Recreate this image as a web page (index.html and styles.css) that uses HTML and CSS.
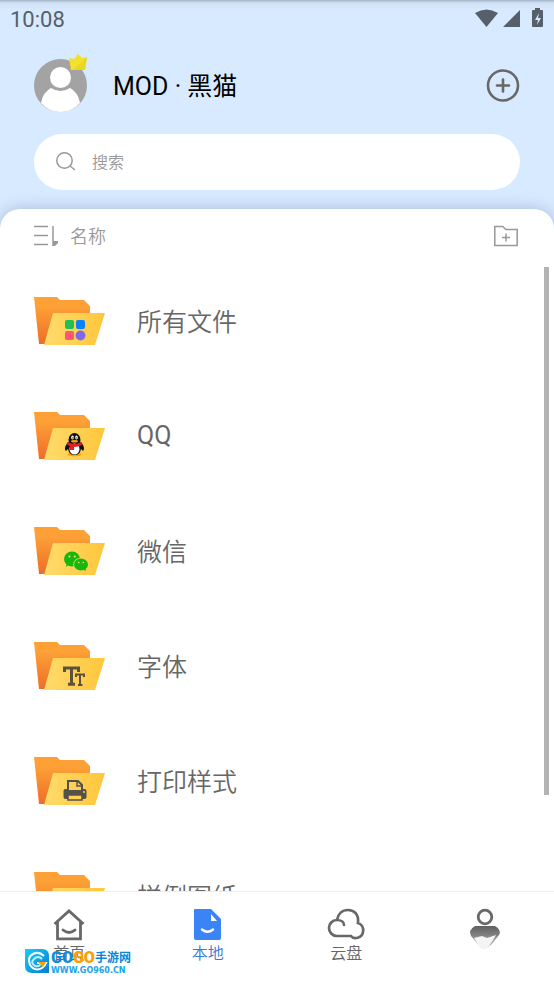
FILE: index.html
```html
<!DOCTYPE html>
<html lang="zh-CN">
<head>
    <meta charset="UTF-8">
    <meta name="viewport" content="width=device-width, initial-scale=1.0">
    <title>本地</title>
    <link rel="stylesheet" href="styles.css">
</head>
<body>
    <svg class="defs" aria-hidden="true">
        <defs>
            <linearGradient id="backFill" x1="0" y1="0" x2="0" y2="1">
                <stop offset="0.2" stop-color="#fda136"/>
                <stop offset="1" stop-color="#ee6d27"/>
            </linearGradient>
            <linearGradient id="frontFill" x1="0" y1="0" x2="1" y2="0">
                <stop offset="0" stop-color="#ffdb6c"/>
                <stop offset="1" stop-color="#ffc63b"/>
            </linearGradient>
            <linearGradient id="meFill" x1="0" y1="0" x2="0" y2="1">
                <stop offset="0" stop-color="#606060"/>
                <stop offset="0.4" stop-color="#808080"/>
                <stop offset="0.7" stop-color="#b6b6b6"/>
                <stop offset="1" stop-color="#f5f5f5"/>
            </linearGradient>
            <linearGradient id="markFill" x1="0" y1="0" x2="1" y2="1">
                <stop offset="0" stop-color="#16cdf5"/>
                <stop offset="1" stop-color="#087dd1"/>
            </linearGradient>
            <symbol id="folder" viewBox="0 0 72 50">
                <path d="M0 1h23l3 3h24l6 6v38H5z" fill="url(#backFill)"/>
                <path d="M19 17h52l-10 32H10z" fill="url(#frontFill)"/>
            </symbol>
        </defs>
    </svg>

    <div class="app">
        <header class="header">
            <div class="status-bar">
                <span>10:08</span>
                <svg width="70" height="20" viewBox="0 0 70 20" fill="#56606a">
                    <path d="M1 4Q12.500-3 24 4L12.500 18z"/>
                    <path d="M46 1v17H29z"/>
                    <path d="M59 1h2V-1h5v2h2q1 0 1 1v15q0 1-1 1h-9q-1 0-1-1V2q0-1 1-1z"/>
                    <path d="M65 4l-4 7h3l-1 5 4-7h-3z" fill="#d8eaff"/>
                </svg>
            </div>

            <div class="profile">
                <div class="avatar">
                    <svg width="54" height="54" viewBox="0 0 54 54">
                        <circle cx="26.500" cy="26.500" r="26.500" fill="#a3a3a3"/>
                        <circle cx="26.500" cy="18.500" r="10.500" fill="#fff"/>
                        <path d="M7 44Q9 33 17 29q9.500 6 19 0 8 4 10 15-8 9-19.500 9T7 44z" fill="#fff"/>
                    </svg>
                    <svg class="crown" width="18" height="17" viewBox="0 0 18 17">
                        <path d="M0 4l5 1 4-5 4 4 5-1-2 13H2z" fill="#f2e22b"/>
                        <path d="M18 3L4 16h12z" fill="#ead71f"/>
                    </svg>
                </div>
                <h1 class="user-name">MOD · 黑猫</h1>
                <button type="button" aria-label="添加">
                    <svg width="34" height="34" viewBox="0 0 34 34" fill="none" stroke="#686868" stroke-width="2.600" stroke-linecap="round">
                        <circle cx="17" cy="16.500" r="15"/>
                        <path d="M17 10.500v12M11 16.500h12"/>
                    </svg>
                </button>
            </div>

            <label class="search">
                <svg width="20" height="20" viewBox="0 0 20 20" fill="none" stroke="#999" stroke-width="1.500">
                    <circle cx="8.500" cy="8.500" r="7.700"/>
                    <path d="M14 14l5 4"/>
                </svg>
                <input type="text" placeholder="搜索" aria-label="搜索">
            </label>
        </header>

        <main class="panel">
            <div class="toolbar">
                <button class="sort-btn" type="button">
                    <svg width="24" height="22" viewBox="0 0 24 22" fill="none" stroke="#999" stroke-width="1.500">
                        <path d="M0 1.500h14M0 10.500h14M0 19.500h14M19 1v20"/>
                        <path d="M19 16h5v2l-3 3h-2z" fill="#999" stroke="none"/>
                    </svg>
                    <span class="label">名称</span>
                </button>
                <button type="button" aria-label="新建文件夹">
                    <svg width="24" height="22" viewBox="0 0 24 22" fill="none" stroke="#999" stroke-width="1.500">
                        <path d="M.8 1.500h8l3 3h11.400v16H.8z"/>
                        <path d="M12 8.500v8M8 12.500h8"/>
                    </svg>
                </button>
            </div>

            <div class="list-area">
                <ul class="folder-list">
                    <li class="folder-row">
                        <svg class="folder-icon" viewBox="0 0 72 50">
                            <use href="#folder"/>
                            <rect x="31" y="24" width="9" height="9" rx="2" fill="#21c052"/>
                            <rect x="42" y="24" width="9" height="9" rx="2" fill="#0782ff"/>
                            <rect x="31" y="35" width="9" height="9" rx="2" fill="#fb5871"/>
                            <circle cx="46.500" cy="39.500" r="4.900" fill="#7e68ef"/>
                        </svg>
                        <span class="label">所有文件</span>
                    </li>
                    <li class="folder-row">
                        <svg class="folder-icon" viewBox="0 0 72 50">
                            <use href="#folder"/>
                            <ellipse cx="40.500" cy="43.500" rx="7" ry="1.800" fill="#f5a400"/>
                            <path d="M34 31c-3 4-4 7-2 9l2-2q1 6 6.500 6t6.500-6l2 2c2-2 1-5-2-9z" fill="#111"/>
                            <ellipse cx="40.500" cy="29" rx="6" ry="7" fill="#111"/>
                            <ellipse cx="40.500" cy="38" rx="5" ry="5.500" fill="#fff"/>
                            <ellipse cx="38.500" cy="26.500" rx="1.300" ry="2" fill="#fff"/>
                            <ellipse cx="42.500" cy="26.500" rx="1.300" ry="2" fill="#fff"/>
                            <circle cx="38.800" cy="26.800" r=".6"/>
                            <circle cx="42.200" cy="26.800" r=".6"/>
                            <ellipse cx="40.500" cy="30.300" rx="3.500" ry="1.200" fill="#f7a500"/>
                            <path d="M34 31q6.500 4 13 0l1 3q-4 2-8 2v3h-4v-4l-3-1z" fill="#e51d24"/>
                        </svg>
                        <span>QQ</span>
                    </li>
                    <li class="folder-row">
                        <svg class="folder-icon" viewBox="0 0 72 50">
                            <use href="#folder"/>
                            <path d="M32 41l1-5h5z" fill="#18b70d"/>
                            <ellipse cx="38" cy="33" rx="8" ry="7.500" fill="#18b70d"/>
                            <ellipse cx="47" cy="38.500" rx="7.800" ry="6.800" fill="#ffce50"/>
                            <ellipse cx="47" cy="38.500" rx="7" ry="6" fill="#18b70d"/>
                            <path d="M48 43l4 2-1-4z" fill="#18b70d"/>
                            <g fill="#ffe17b">
                                <circle cx="35.500" cy="30.500" r="1"/>
                                <circle cx="40.800" cy="30.500" r="1"/>
                                <circle cx="44.800" cy="36.500" r=".8"/>
                                <circle cx="49.300" cy="36.500" r=".8"/>
                            </g>
                        </svg>
                        <span class="label">微信</span>
                    </li>
                    <li class="folder-row">
                        <svg class="folder-icon" viewBox="0 0 72 50">
                            <use href="#folder"/>
                            <g fill="none" stroke="#5b523e">
                                <path d="M30.500 31v-4h14v4M37.500 27v16M34 43.300h7" stroke-width="3"/>
                                <path d="M42 36v-2.500h8V36M46 33v10.500M44 44h4.500" stroke-width="2"/>
                            </g>
                        </svg>
                        <span class="label">字体</span>
                    </li>
                    <li class="folder-row">
                        <svg class="folder-icon" viewBox="0 0 72 50">
                            <use href="#folder"/>
                            <rect x="29.500" y="33" width="23" height="10" rx="2" fill="#555149"/>
                            <path d="M34 35V25h10l4 4v6z" fill="#ffd057" stroke="#555149" stroke-width="2"/>
                            <path d="M43 25v5h5" fill="none" stroke="#555149" stroke-width="1.500"/>
                            <path d="M34 39h14v5H34z" fill="#ffd057" stroke="#555149" stroke-width="1.500"/>
                            <circle cx="50" cy="36" r="1" fill="#ffd057"/>
                        </svg>
                        <span class="label">打印样式</span>
                    </li>
                    <li class="folder-row">
                        <svg class="folder-icon" viewBox="0 0 72 50">
                            <use href="#folder"/>
                        </svg>
                        <span class="label">样例图纸</span>
                    </li>
                </ul>
                <div class="scroll-thumb"></div>
            </div>
        </main>

        <nav class="tab-bar">
            <a class="tab" href="#home">
                <svg width="34" height="34" viewBox="0 0 34 34" fill="none" stroke="#686868" stroke-width="2.800">
                    <path d="M5.500 14v16.800h23V14"/>
                    <path d="M2.500 16L17 3l14.500 13"/>
                    <path d="M11 22q6 5 12 0" stroke-linecap="round"/>
                </svg>
                <span>首页</span>
            </a>
            <a class="tab active" href="#local">
                <svg width="34" height="34" viewBox="0 0 34 34">
                    <path d="M4 1h16l10 10v19q0 2-2 2H5q-2 0-2-2V2q0-1 1-1z" fill="#3a84f5"/>
                    <path d="M20 6v7h6z" fill="#fff"/>
                    <path d="M11 21.500q5.500 4.500 11 0" fill="none" stroke="#fff" stroke-width="2.500" stroke-linecap="round"/>
                </svg>
                <span>本地</span>
            </a>
            <a class="tab" href="#cloud">
                <svg width="38" height="34" viewBox="0 0 38 34" fill="none" stroke="#686868" stroke-width="2.700" stroke-linecap="round">
                    <path d="M17 17c0-3-3-5-7-5-5 0-8 4-8 8s3 8 8 8h14c3 4 11 2 12-4 1-5-2-8-5-9C32 6 27 2 21 2c-6 0-10 4-11 10"/>
                </svg>
                <span>云盘</span>
            </a>
            <a class="tab" href="#me" aria-label="我的">
                <svg width="34" height="44" viewBox="0 0 34 44">
                    <circle cx="17" cy="9" r="6.800" fill="none" stroke="#686868" stroke-width="2.800"/>
                    <path d="M7 18h20q7 4 4 9l-8 10q-7 7-11 2L3 28q-3-6 4-10z" fill="url(#meFill)"/>
                    <path d="M6 30l8-2 5 2 9-3-6 10-5 4-6-3z" fill="#f4f4f4"/>
                    <path d="M22 37l6-7" stroke="#a5a5a5"/>
                </svg>
            </a>
        </nav>

        <div class="watermark">
            <svg width="24" height="24" viewBox="0 0 24 24">
                <path d="M0 0h17q7 0 7 7v17H7q-7 0-7-7z" fill="url(#markFill)"/>
                <path d="M19 7Q14 2 8 5T5 16q5 7 12 3 3-2 4-5h-9" fill="none" stroke="#fff" stroke-width="2"/>
                <path d="M17 10q-4-4-8 0t1 7q4 1 6-2" fill="none" stroke="#b7f1ff" stroke-width="2"/>
                <path d="M13 13h8l-3 5z" fill="#ff9d00"/>
            </svg>
            <div class="mark-text">
                <div class="mark-name"><b class="blue">GO</b><b class="orange">GO</b><strong>手游网</strong></div>
                <small>WWW.GO960.CN</small>
            </div>
        </div>
    </div>
</body>
</html>
```

FILE: styles.css
```css
* {
    box-sizing: border-box;
}
body {
    margin: 0;
    font-family: Roboto, "Noto Sans CJK SC", sans-serif;
    color: #666;
    background-color: #fff;
}
svg {
    display: block;
    flex: none;
    overflow: visible;
}
button {
    border: none;
    padding: 0;
    background: none;
    font: inherit;
    color: inherit;
    cursor: pointer;
}
.defs {
    position: absolute;
    width: 0;
    height: 0;
}
.app {
    position: relative;
    display: flex;
    flex-direction: column;
    height: 100vh;
    overflow: hidden;
    background-color: #d8eaff;
}
.header {
    padding-bottom: 19px;
    background: linear-gradient(#a5b5c8, #d1e1f5 3px, #d8eaff 10px);
}
.status-bar {
    display: flex;
    align-items: center;
    justify-content: space-between;
    height: 38px;
    padding: 0 10px;
    font-size: 22px;
    color: #56606a;
}
.profile {
    display: flex;
    align-items: center;
    height: 96px;
    padding: 0 34px;
}
.avatar {
    position: relative;
}
.crown {
    position: absolute;
    top: -5px;
    right: 1px;
}
.user-name {
    flex: 1;
    margin: 0;
    padding: 2px 0 0 25px;
    font-size: 25px;
    font-weight: 400;
    line-height: 32px;
    color: #000;
}
.search {
    display: flex;
    align-items: center;
    gap: 16px;
    height: 56px;
    margin: 0 34px;
    padding: 0 22px;
    border-radius: 28px;
    background-color: #fff;
}
.search input {
    flex: 1;
    min-width: 0;
    padding: 0;
    border: none;
    outline: none;
    background: none;
    font: inherit;
    font-size: 16px;
    font-weight: 350;
}
.search input::placeholder {
    color: #999;
    opacity: 1;
}
.panel {
    display: flex;
    flex: 1;
    flex-direction: column;
    min-height: 0;
    border-radius: 20px 20px 0 0;
    background-color: #fff;
    box-shadow: 0 0 16px rgba(70, 100, 150, 0.35);
}
.toolbar {
    display: flex;
    flex: none;
    align-items: center;
    justify-content: space-between;
    height: 54px;
    padding: 0 36px 0 34px;
}
.sort-btn {
    display: flex;
    align-items: center;
    gap: 12px;
    font-size: 18px;
    color: #999;
}
.label {
    padding-bottom: 2px;
    font-weight: 350;
}
.list-area {
    position: relative;
    flex: 1;
    min-height: 0;
    overflow: hidden;
}
.folder-list {
    margin: 0;
    padding: 0;
    list-style: none;
}
.folder-row {
    display: flex;
    align-items: center;
    gap: 31px;
    height: 115px;
    padding: 0 34px;
    font-size: 25px;
}
.folder-icon {
    width: 72px;
    height: 50px;
}
.scroll-thumb {
    position: absolute;
    top: 4px;
    right: 5px;
    width: 5px;
    height: 84%;
    background-color: #b3b3b3;
}
.tab-bar {
    display: flex;
    flex: none;
    height: 93px;
    padding-top: 16px;
    border-top: 1px solid #eee;
    background-color: #fff;
}
.tab {
    display: flex;
    flex: 1;
    flex-direction: column;
    align-items: center;
    font-size: 16px;
    font-weight: 350;
    line-height: 24px;
    color: #666;
    text-decoration: none;
}
.tab.active {
    color: #3a78d4;
}
.watermark {
    position: absolute;
    left: 25px;
    bottom: 9px;
    display: flex;
    align-items: flex-start;
    gap: 2px;
}
.mark-name {
    display: flex;
    align-items: center;
    height: 18px;
    font-size: 12px;
    line-height: 18px;
    white-space: nowrap;
    color: #0787da;
}
.mark-name b {
    font-size: 16px;
    font-weight: 900;
}
.blue {
    color: #098fdc;
}
.orange {
    color: #ff9d00;
}
.mark-text small {
    display: block;
    font-family: "DejaVu Sans", sans-serif;
    font-size: 8px;
    font-weight: 700;
    line-height: 8px;
    color: #20a3ed;
}
```
